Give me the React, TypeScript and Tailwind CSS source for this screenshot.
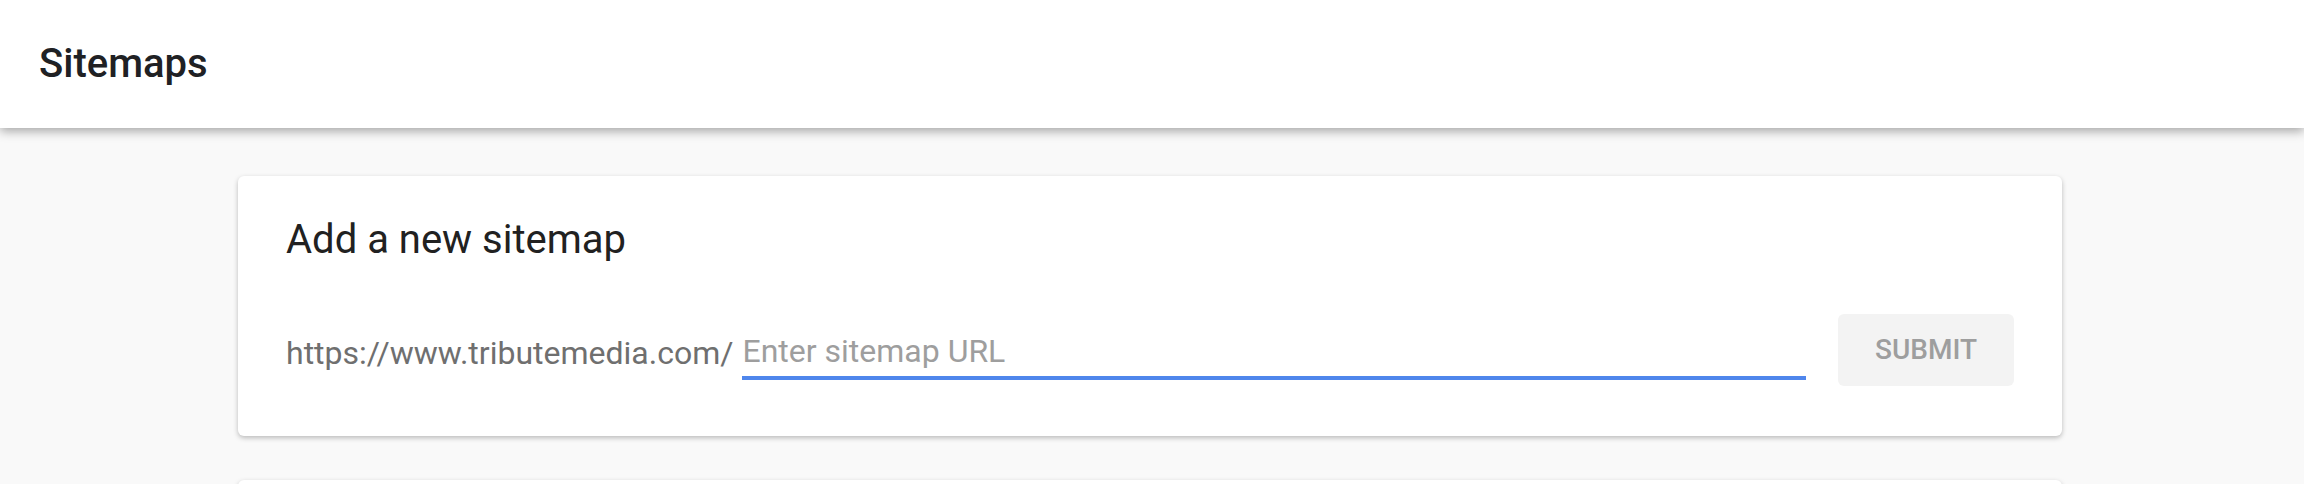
import { useState } from 'react';

export default function App() {
    const [path, setPath] = useState('');

    return (
        <div className="min-h-[484px] bg-[#f9f9f9] font-['Roboto','Liberation_Sans',sans-serif]">
            {/* Top bar */}
            <header className="relative z-10 h-[128px] bg-white flex items-center px-[39px] shadow-[0_3px_10px_rgba(0,0,0,0.35)]">
                <h1 className="text-[40px] leading-none font-medium text-[#202124]">Sitemaps</h1>
            </header>

            <main className="pt-[48px] pl-[238px]">
                {/* Add sitemap card */}
                <div className="w-[1824px] bg-white rounded-[6px] shadow-[0_2px_5px_rgba(0,0,0,0.25)] px-[48px] pt-[44px] pb-[50px]">
                    <h2 className="text-[40px] leading-none text-[#212121]">Add a new sitemap</h2>
                    <div className="flex items-end h-[72px] mt-[54px]">
                        <span className="text-[32px] leading-[40px] text-[#6f6f6f] mb-[13px] whitespace-nowrap">https://www.tributemedia.com/</span>
                        <div className="flex-1 ml-[9px] mb-[6px] border-b-4 border-[#4f86ec] pt-[6px]">
                            <input
                                value={path}
                                onChange={e => setPath(e.target.value)}
                                placeholder="Enter sitemap URL"
                                className="w-full h-[50px] leading-[50px] text-[32px] text-[#212121] placeholder:text-[#9e9e9e] outline-none bg-transparent"
                            />
                        </div>
                        <button className="ml-[32px] w-[176px] h-[72px] rounded-[6px] bg-[#f3f3f3] text-[28px] font-medium text-[#9e9e9e] uppercase">
                            Submit
                        </button>
                    </div>
                </div>

                {/* Next card (mostly below the fold) */}
                <div className="w-[1824px] h-[200px] mt-[44px] bg-white rounded-[6px] shadow-[0_2px_5px_rgba(0,0,0,0.25)]" />
            </main>
        </div>
    );
}
